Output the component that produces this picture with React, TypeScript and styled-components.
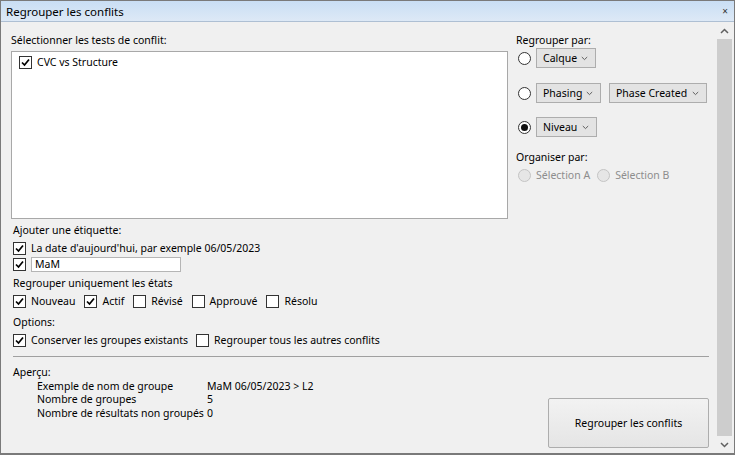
import React from 'react';
import styled, { createGlobalStyle } from 'styled-components';

const GlobalStyle = createGlobalStyle`
    html, body {
        margin: 0;
        padding: 0;
        background: #ffffff;
    }
    body {
        font-family: "Noto Sans", "Open Sans", sans-serif;
        font-size: 10.5px;
        color: #000000;
    }
`;

function CheckMark() {
    return (
        <svg width="11" height="11" viewBox="0 0 11 11">
            <path d="M2 5.5 L4.5 8 L9 2.5" fill="none" stroke="#000" strokeWidth="1.7" />
        </svg>
    );
}

function Check({ checked, label }: { checked?: boolean; label?: string }) {
    return (
        <CheckRow>
            <CheckBox>{checked && <CheckMark />}</CheckBox>
            {label && <span>{label}</span>}
        </CheckRow>
    );
}

function Radio({ checked, disabled, label }: { checked?: boolean; disabled?: boolean; label?: string }) {
    return (
        <CheckRow $disabled={disabled}>
            <RadioCircle $disabled={disabled}>{checked && <RadioDot />}</RadioCircle>
            {label && <span>{label}</span>}
        </CheckRow>
    );
}

function Chevron() {
    return (
        <svg width="7" height="5" viewBox="0 0 7 5">
            <path d="M0.8 1 L3.5 3.6 L6.2 1" fill="none" stroke="#606060" strokeWidth="1" />
        </svg>
    );
}

function Dropdown({ label, width }: { label: string; width: number }) {
    return (
        <Select $width={width}>
            <span>{label}</span>
            <Chevron />
        </Select>
    );
}

function App() {
    return (
        <>
            <GlobalStyle />
            <Window>
                <TitleBar>
                    <span>Regrouper les conflits</span>
                    <Close>×</Close>
                </TitleBar>
                <Body>
                    <Content>
                        <Top>
                            <LeftCol>
                                <Label>Sélectionner les tests de conflit:</Label>
                                <ListBox>
                                    <ListItem>
                                        <Check checked label="CVC vs Structure" />
                                    </ListItem>
                                </ListBox>
                            </LeftCol>
                            <RightCol>
                                <Label>Regrouper par:</Label>
                                <GroupRow $gap={0}>
                                    <Radio />
                                    <Dropdown label="Calque" width={60} />
                                </GroupRow>
                                <GroupRow $gap={15}>
                                    <Radio />
                                    <Dropdown label="Phasing" width={65} />
                                    <Dropdown label="Phase Created" width={98} />
                                </GroupRow>
                                <GroupRow $gap={14}>
                                    <Radio checked />
                                    <Dropdown label="Niveau" width={61} />
                                </GroupRow>
                                <SubLabel>Organiser par:</SubLabel>
                                <Inline $gap={7}>
                                    <Radio disabled label="Sélection A" />
                                    <Radio disabled label="Sélection B" />
                                </Inline>
                            </RightCol>
                        </Top>

                        <Section $top={4}>
                            <SectionLabel>Ajouter une étiquette:</SectionLabel>
                            <Check checked label="La date d'aujourd'hui, par exemple 06/05/2023" />
                            <Inline $gap={6}>
                                <Check checked />
                                <TextBox>MaM</TextBox>
                            </Inline>
                        </Section>

                        <Section $top={4}>
                            <SectionLabel>Regrouper uniquement les états</SectionLabel>
                            <Inline $gap={9}>
                                <Check checked label="Nouveau" />
                                <Check checked label="Actif" />
                                <Check label="Révisé" />
                                <Check label="Approuvé" />
                                <Check label="Résolu" />
                            </Inline>
                        </Section>

                        <Section $top={6}>
                            <SectionLabel>Options:</SectionLabel>
                            <Inline $gap={8}>
                                <Check checked label="Conserver les groupes existants" />
                                <Check label="Regrouper tous les autres conflits" />
                            </Inline>
                        </Section>

                        <Separator />

                        <Bottom>
                            <Preview>
                                <span>Aperçu:</span>
                                <PreviewGrid>
                                    <span>Exemple de nom de groupe</span>
                                    <span>MaM 06/05/2023 &gt; L2</span>
                                    <span>Nombre de groupes</span>
                                    <span>5</span>
                                    <span>Nombre de résultats non groupés</span>
                                    <span>0</span>
                                </PreviewGrid>
                            </Preview>
                            <Button>Regrouper les conflits</Button>
                        </Bottom>
                    </Content>
                    <Scrollbar>
                        <Arrow>
                            <svg width="9" height="6" viewBox="0 0 9 6">
                                <path d="M1 5 L4.5 1.5 L8 5" fill="none" stroke="#606060" strokeWidth="1.5" />
                            </svg>
                        </Arrow>
                        <Thumb />
                        <Arrow>
                            <svg width="9" height="6" viewBox="0 0 9 6">
                                <path d="M1 1 L4.5 4.5 L8 1" fill="none" stroke="#606060" strokeWidth="1.5" />
                            </svg>
                        </Arrow>
                    </Scrollbar>
                </Body>
            </Window>
        </>
    );
}

const Window = styled.div`
    width: 735px;
    height: 455px;
    box-sizing: border-box;
    border: 1px solid #7a7a7a;
    border-bottom-width: 2px;
    display: flex;
    flex-direction: column;
    background: #f0f0f0;
`;
const TitleBar = styled.div`
    height: 20px;
    flex: none;
    display: flex;
    align-items: center;
    justify-content: space-between;
    padding: 0 6px 0 5px;
    background: linear-gradient(#c9def4, #dde9f6);
    border-bottom: 1px solid #aebfd3;
    font-size: 11.5px;
`;
const Close = styled.span`
    font-size: 10px;
    color: #333;
`;
const Body = styled.div`
    flex: 1;
    display: flex;
    min-height: 0;
`;
const Content = styled.div`
    flex: 1;
    padding: 11px 7px 0 10px;
    display: flex;
    flex-direction: column;
`;
const Top = styled.div`
    display: flex;
    gap: 8px;
`;
const LeftCol = styled.div`
    width: 497px;
    display: flex;
    flex-direction: column;
    gap: 3px;
`;
const RightCol = styled.div`
    flex: 1;
    display: flex;
    flex-direction: column;
`;
const Label = styled.div`
    line-height: 15px;
    height: 15px;
    white-space: nowrap;
`;
const SubLabel = styled(Label)`
    margin-top: 13px;
    margin-bottom: 3px;
`;
const SectionLabel = styled(Label)`
    margin-bottom: 2px;
`;
const ListBox = styled.div`
    height: 168px;
    box-sizing: border-box;
    background: #ffffff;
    border: 1px solid #a8a8a8;
    padding: 3px 7px;
`;
const ListItem = styled.div`
    height: 15px;
`;
const CheckRow = styled.label<{ $disabled?: boolean }>`
    display: flex;
    align-items: center;
    gap: 5px;
    line-height: 15px;
    height: 15px;
    white-space: nowrap;
    color: ${({ $disabled }) => ($disabled ? '#8d8d8d' : '#000')};
`;
const CheckBox = styled.span`
    width: 13px;
    height: 13px;
    box-sizing: border-box;
    border: 1px solid #333333;
    background: #ffffff;
    display: flex;
    align-items: center;
    justify-content: center;
    flex: none;
`;
const RadioCircle = styled.span<{ $disabled?: boolean }>`
    width: 13px;
    height: 13px;
    box-sizing: border-box;
    border-radius: 50%;
    border: 1px solid ${({ $disabled }) => ($disabled ? '#c4c4c4' : '#333333')};
    background: ${({ $disabled }) => ($disabled ? '#e6e6e6' : '#ffffff')};
    display: flex;
    align-items: center;
    justify-content: center;
    flex: none;
`;
const RadioDot = styled.span`
    width: 7px;
    height: 7px;
    border-radius: 50%;
    background: #111;
`;
const GroupRow = styled.div<{ $gap: number }>`
    display: flex;
    align-items: center;
    gap: 5px;
    padding-left: 2px;
    margin-top: ${({ $gap }) => $gap}px;
    & > *:nth-child(3) {
        margin-left: 3px;
    }
`;
const Select = styled.div<{ $width: number }>`
    width: ${({ $width }) => $width}px;
    height: 20px;
    box-sizing: border-box;
    border: 1px solid #adadad;
    background: #e3e3e3;
    display: flex;
    align-items: center;
    justify-content: space-between;
    padding: 0 7px 0 6px;
    white-space: nowrap;
`;
const Inline = styled.div<{ $gap: number }>`
    display: flex;
    align-items: center;
    gap: ${({ $gap }) => $gap}px;
    padding-left: 2px;
`;
const Section = styled.div<{ $top: number }>`
    display: flex;
    flex-direction: column;
    gap: 1px;
    margin-top: ${({ $top }) => $top}px;
    padding-left: 2px;
    & ${Inline} {
        padding-left: 0;
    }
`;
const TextBox = styled.div`
    width: 150px;
    height: 15px;
    box-sizing: border-box;
    border: 1px solid #b5b5b5;
    background: #ffffff;
    line-height: 13px;
    padding-left: 3px;
    margin-left: -1px;
`;
const Separator = styled.div`
    height: 1px;
    background: #a0a0a0;
    margin: 8px 0 0 2px;
`;
const Bottom = styled.div`
    flex: 1;
    display: flex;
    justify-content: space-between;
    align-items: flex-end;
    padding: 9px 0 5px 2px;
`;
const Preview = styled.div`
    align-self: flex-start;
    line-height: 13.5px;
    white-space: nowrap;
`;
const PreviewGrid = styled.div`
    display: grid;
    grid-template-columns: 170px auto;
    padding-left: 24px;
`;
const Button = styled.button`
    width: 161px;
    height: 50px;
    font: inherit;
    color: #000;
    border: 1px solid #adadad;
    border-radius: 2px;
    background: linear-gradient(#f2f2f2, #e5e5e5);
`;
const Scrollbar = styled.div`
    width: 17px;
    flex: none;
    display: flex;
    flex-direction: column;
    background: #f0f0f0;
    margin-right: 1px;
`;
const Arrow = styled.div`
    height: 17px;
    display: flex;
    align-items: center;
    justify-content: center;
`;
const Thumb = styled.div`
    flex: 1;
    background: #cdcdcd;
    margin: 0 1px;
`;

export default App;
